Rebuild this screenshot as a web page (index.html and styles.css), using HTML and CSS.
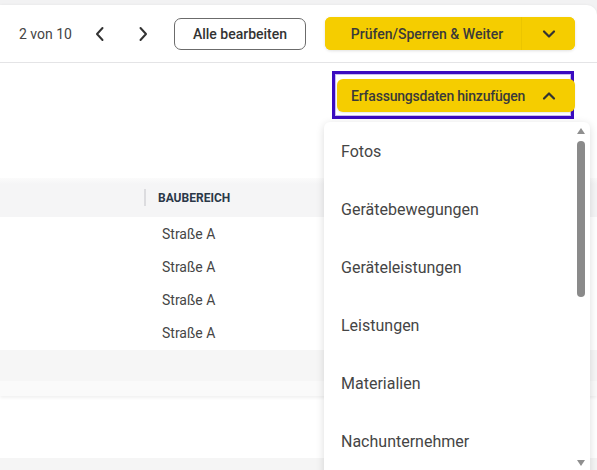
FILE: index.html
```html
<!DOCTYPE html>
<html lang="de">
<head>
<meta charset="utf-8">
<link rel="stylesheet" href="styles.css">
</head>
<body>
<div class="page">
  <div class="panel">
    <div class="toolbar">
      <span class="counter">2 von 10</span>
      <button class="icon-btn" aria-label="zurück">
        <svg width="12" height="16" viewBox="0 0 12 16"><path d="M8.5 2 L3 8 L8.5 14" fill="none" stroke="#333" stroke-width="2" stroke-linecap="round" stroke-linejoin="round"/></svg>
      </button>
      <button class="icon-btn" aria-label="weiter">
        <svg width="12" height="16" viewBox="0 0 12 16"><path d="M3.5 2 L9 8 L3.5 14" fill="none" stroke="#333" stroke-width="2" stroke-linecap="round" stroke-linejoin="round"/></svg>
      </button>
      <button class="btn-outline">Alle bearbeiten</button>
      <div class="split">
        <button class="split-main">Prüfen/Sperren &amp; Weiter</button>
        <button class="split-toggle" aria-label="mehr">
          <svg width="14" height="10" viewBox="0 0 14 10"><path d="M2 2.5 L7 7.5 L12 2.5" fill="none" stroke="#333" stroke-width="2.2" stroke-linecap="round" stroke-linejoin="round"/></svg>
        </button>
      </div>
    </div>
    <div class="content">
      <div class="actions">
        <div class="focus-ring">
          <button class="btn-yellow"><span class="btn-label">Erfassungsdaten hinzufügen</span>
            <svg width="14" height="10" viewBox="0 0 14 10"><path d="M2 7.5 L7 2.5 L12 7.5" fill="none" stroke="#333" stroke-width="2.2" stroke-linecap="round" stroke-linejoin="round"/></svg>
          </button>
        </div>
      </div>
      <div class="table">
        <div class="thead">
          <div class="col-sep"></div>
          <div class="th">BAUBEREICH</div>
        </div>
        <div class="row"><span class="td">Straße A</span></div>
        <div class="row"><span class="td">Straße A</span></div>
        <div class="row"><span class="td">Straße A</span></div>
        <div class="row"><span class="td">Straße A</span></div>
        <div class="tfoot"></div>
        <div class="tfoot2"></div>
      </div>
      <div class="below"></div>
    </div>
  </div>
  <div class="menu">
    <ul class="menu-list">
      <li>Fotos</li>
      <li>Gerätebewegungen</li>
      <li>Geräteleistungen</li>
      <li>Leistungen</li>
      <li>Materialien</li>
      <li>Nachunternehmer</li>
    </ul>
    <div class="scrollbar">
      <span class="arrow-up"></span>
      <span class="thumb"></span>
      <span class="arrow-down"></span>
    </div>
  </div>
</div>
</body>
</html>
```
FILE: styles.css
```css
* { box-sizing: border-box; }
html, body {
  margin: 0;
  padding: 0;
  width: 597px;
  height: 470px;
  overflow: hidden;
  background: #f2f2f3;
  font-family: Roboto, "Liberation Sans", sans-serif;
}
button { font-family: inherit; cursor: pointer; }
.page {
  position: relative;
  padding-top: 5px;
  height: 470px;
}
.panel {
  background: #fff;
  border-top-right-radius: 10px;
  box-shadow: 0 0 3px rgba(0,0,0,0.06);
  height: 465px;
  overflow: hidden;
}
.toolbar {
  height: 58px;
  display: flex;
  align-items: center;
  padding-left: 19px;
  border-bottom: 1px solid #e4e4e6;
}
.counter {
  font-size: 14px;
  color: #444;
  margin-right: 16px;
}
.icon-btn {
  background: none;
  border: 0;
  padding: 0;
  width: 24px;
  height: 24px;
  display: flex;
  align-items: center;
  justify-content: center;
  margin-right: 19px;
}
.btn-outline {
  height: 32px;
  width: 132px;
  border: 1px solid #6b6b6b;
  border-radius: 7px;
  background: #fff;
  font-size: 14px;
  font-weight: 500;
  color: #333;
  padding: 0;
}
.split {
  margin-left: 19px;
  display: flex;
  height: 33px;
  width: 250px;
  border-radius: 6px;
  background: #f5cd00;
  overflow: hidden;
  box-shadow: 0 1px 3px rgba(0,0,0,0.12);
}
.split-main {
  flex: 1;
  border: 0;
  background: #f5cd00;
  font-size: 14px;
  font-weight: 500;
  color: #3a3a3a;
  padding: 0 0 0 8px;
  border-right: 1px solid #ebc500;
}
.split-toggle {
  width: 53px;
  border: 0;
  background: #f5cd00;
  display: flex;
  align-items: center;
  justify-content: center;
  padding: 0 0 0 2px;
}
.actions {
  height: 115px;
  display: flex;
  justify-content: flex-end;
  padding-top: 8px;
  padding-right: 23px;
}
.focus-ring {
  width: 242px;
  height: 48px;
  border: 3px solid #3a0bc0;
  box-shadow: inset 0 0 0 1px #c8bdf0;
  padding-top: 5px;
  padding-left: 2px;
}
.btn-yellow {
  width: 238px;
  height: 33px;
  border: 0;
  border-radius: 6px;
  background: #f5cd00;
  font-size: 14px;
  font-weight: 500;
  color: #3a3a3a;
  display: flex;
  align-items: center;
  padding: 0 0 0 14px;
  margin-right: -6px;
  box-shadow: 0 1px 2px rgba(0,0,0,0.1);
}
.btn-label { letter-spacing: -0.2px; }
.btn-yellow svg { margin-left: 17px; }
.table {
  display: flex;
  flex-direction: column;
}
.thead {
  height: 39px;
  background: linear-gradient(#fbfbfb, #f5f5f6 6px);
  display: flex;
  align-items: center;
  padding-left: 144px;
}
.col-sep {
  width: 2px;
  height: 17px;
  background: #dcdcdf;
  margin-right: 12px;
}
.th {
  font-size: 12px;
  font-weight: 700;
  color: #2b3848;
}
.row {
  height: 33px;
  display: flex;
  align-items: center;
  padding-left: 162px;
}
.td {
  font-size: 14px;
  color: #454545;
}
.tfoot {
  height: 31px;
  background: #f6f6f6;
  margin-top: 1px;
}
.tfoot2 {
  height: 15px;
  background: #fafafa;
  box-shadow: 0 2px 3px rgba(0,0,0,0.06);
}
.below {
  height: 80px;
  background: #fff;
  border-bottom: 18px solid #f5f5f5;
}
.menu {
  position: absolute;
  left: 324px;
  top: 122px;
  width: 266px;
  height: 360px;
  background: #fff;
  border-radius: 6px;
  box-shadow: 0 2px 8px rgba(0,0,0,0.14);
  display: flex;
}
.menu-list {
  list-style: none;
  margin: 0;
  padding: 0;
  flex: 1;
}
.menu-list li {
  height: 58px;
  display: flex;
  align-items: center;
  padding-left: 17px;
  font-size: 16px;
  color: #454545;
}
.scrollbar {
  width: 14px;
  position: relative;
  margin-right: 2px;
}
.arrow-up, .arrow-down {
  position: absolute;
  left: 3px;
  width: 0;
  height: 0;
  border-left: 4.5px solid transparent;
  border-right: 4.5px solid transparent;
}
.arrow-up {
  top: 6px;
  border-bottom: 6px solid #8f8f8f;
}
.arrow-down {
  top: 338px;
  border-top: 6px solid #8f8f8f;
}
.thumb {
  position: absolute;
  left: 3px;
  top: 19px;
  width: 8px;
  height: 156px;
  border-radius: 4px;
  background: #8a8a8a;
}
```
